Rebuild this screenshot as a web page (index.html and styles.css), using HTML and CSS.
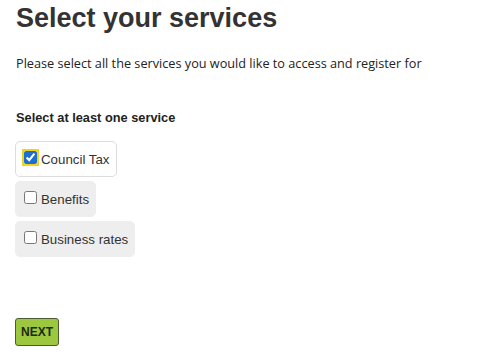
FILE: index.html
```html
<!DOCTYPE html>
<html>
<head>
<meta charset="utf-8">
<link rel="stylesheet" href="styles.css">
</head>
<body>
<main class="page">
  <h1 class="title">Select your services</h1>
  <p class="intro">Please select all the services you would like to access and register for</p>
  <fieldset class="group">
    <legend class="legend">Select at least one service</legend>
    <label class="option option-checked"><input type="checkbox" class="check" checked><span class="label-text">Council Tax</span></label>
    <label class="option"><input type="checkbox" class="check"><span class="label-text">Benefits</span></label>
    <label class="option"><input type="checkbox" class="check"><span class="label-text">Business rates</span></label>
  </fieldset>
  <button class="next" type="button">NEXT</button>
</main>
</body>
</html>
```
FILE: styles.css
```css
html, body {
  margin: 0;
  padding: 0;
  background: #fff;
}
.page {
  padding: 3px 15px 0 15px;
  font-family: "Liberation Sans", Arial, sans-serif;
  color: #333;
}
.title {
  margin: 0 0 0 1px;
  font-size: 27px;
  line-height: 31px;
  font-weight: bold;
  color: #333;
}
.intro {
  margin: 20px 0 0 1px;
  font-family: "Open Sans", sans-serif;
  font-size: 12.7px;
  line-height: 18px;
  color: #222;
}
.group {
  border: 0;
  margin: 38px 0 0 0;
  padding: 0;
  display: flex;
  flex-direction: column;
  align-items: flex-start;
  gap: 4px;
}
.legend {
  padding: 0 0 0 1px;
  font-size: 12.8px;
  font-weight: bold;
  color: #222;
  margin-bottom: 16px;
}
.option {
  display: flex;
  align-items: center;
  height: 36px;
  box-sizing: border-box;
  padding: 0 6px 0 7px;
  background: #eee;
  border: 1px solid #eee;
  border-radius: 5px;
  font-size: 13.3px;
  color: #333;
}
.option-checked {
  background: #fff;
  border-color: #ddd;
}
.check {
  width: 13px;
  height: 13px;
  margin: 0 4px 3px 1px;
  accent-color: #1a6fd1;
}
.option-checked .check {
  outline: 2px solid #f2d21b;
  outline-offset: 0;
}
.next {
  margin: 61px 0 0 0;
  height: 28px;
  padding: 0 5px;
  background: #9cc83f;
  border: 1px solid #4e5a36;
  border-radius: 3px;
  font-family: "Liberation Sans", Arial, sans-serif;
  font-weight: bold;
  font-size: 12px;
  color: #1c2a10;
}
```
